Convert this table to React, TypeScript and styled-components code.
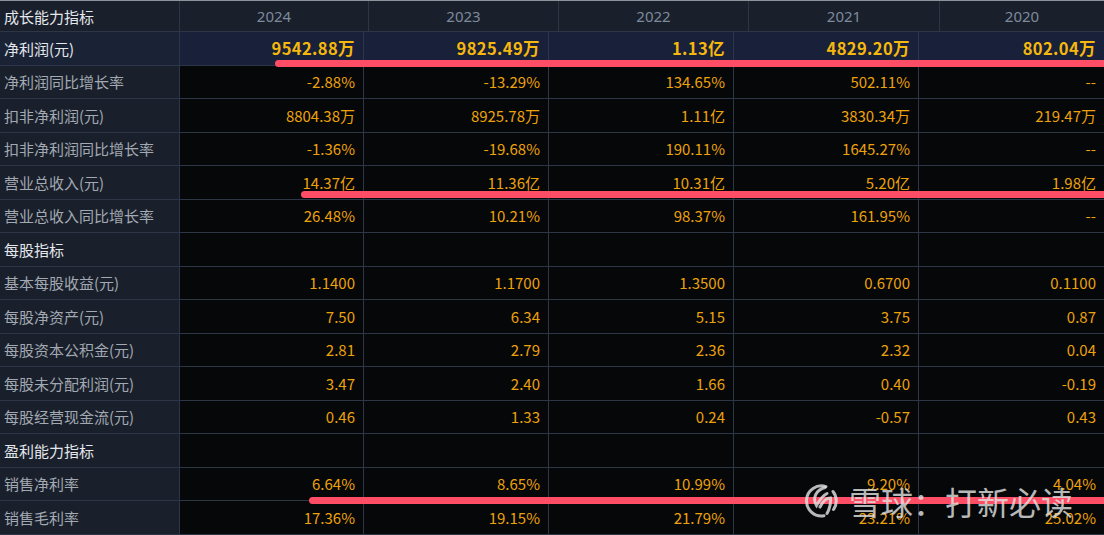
import React from "react";
import styled, { createGlobalStyle } from "styled-components";

const GlobalStyle = createGlobalStyle`
  html, body {
    margin: 0;
    padding: 0;
    background: #050709;
    overflow: hidden;
  }
  body {
    font-family: "Noto Sans CJK SC", "Noto Sans", sans-serif;
  }
`;

const Page = styled.div`
  position: relative;
  width: 1104px;
  height: 535px;
  overflow: hidden;
  background: #050709;
  border-top: 1px solid #8d939b;
  box-sizing: border-box;
`;

const HeaderRow = styled.div`
  display: grid;
  grid-template-columns: 180px 189px 190px 190px 191px 164px;
  height: 30px;
  background: #19202b;
  border-bottom: 1px solid #2d3646;
`;

const Row = styled.div<{ $hl?: boolean }>`
  display: grid;
  grid-template-columns: 180px 184px 185px 185px 185px 185px;
  height: 33.5px;
  box-sizing: border-box;
  border-bottom: 1px solid #2d3646;
  background: ${(p) => (p.$hl ? "#18203a" : "#050709")};
`;

const Label = styled.div<{ $strong?: boolean; $hl?: boolean }>`
  display: flex;
  align-items: center;
  padding-left: 4px;
  font-size: 15px;
  color: ${(p) => (p.$strong ? "#e4e7ec" : "#a3a9b2")};
  background: ${(p) => (p.$hl ? "#1a2236" : "#19202b")};
  border-right: 1px solid #2d3646;
  white-space: nowrap;
`;

const Year = styled.div`
  display: flex;
  align-items: center;
  justify-content: center;
  font-family: "Noto Sans", sans-serif;
  font-size: 15px;
  color: #7d8a9d;
  border-right: 1px solid #2d3646;
  &:last-child {
    border-right: none;
  }
`;

const Cell = styled.div<{ $bold?: boolean }>`
  display: flex;
  align-items: center;
  justify-content: flex-end;
  padding-right: 8px;
  font-size: ${(p) => (p.$bold ? "16.5px" : "15px")};
  letter-spacing: ${(p) => (p.$bold ? "0.4px" : "0")};
  font-weight: ${(p) => (p.$bold ? 700 : 400)};
  color: ${(p) => (p.$bold ? "#f6b80c" : "#eda20a")};
  border-right: 1px solid #2d3646;
  white-space: nowrap;
  &:last-child {
    border-right: none;
  }
`;

const Marker = styled.div<{ $top: number; $left: number }>`
  position: absolute;
  top: ${(p) => p.$top}px;
  left: ${(p) => p.$left}px;
  right: -10px;
  height: 7px;
  border-radius: 4px;
  background: #fe4d64;
`;

const Watermark = styled.div`
  position: absolute;
  left: 803px;
  top: 480px;
  display: flex;
  align-items: center;
  gap: 10px;
  font-size: 32px;
  line-height: 40px;
  color: rgba(225, 225, 225, 0.82);
  white-space: nowrap;
`;

type RowData = {
  label: string;
  values?: string[];
  strong?: boolean;
  hl?: boolean;
};

const years = ["2024", "2023", "2022", "2021", "2020"];

const rows: RowData[] = [
  { label: "净利润(元)", values: ["9542.88万", "9825.49万", "1.13亿", "4829.20万", "802.04万"], strong: true, hl: true },
  { label: "净利润同比增长率", values: ["-2.88%", "-13.29%", "134.65%", "502.11%", "--"] },
  { label: "扣非净利润(元)", values: ["8804.38万", "8925.78万", "1.11亿", "3830.34万", "219.47万"] },
  { label: "扣非净利润同比增长率", values: ["-1.36%", "-19.68%", "190.11%", "1645.27%", "--"] },
  { label: "营业总收入(元)", values: ["14.37亿", "11.36亿", "10.31亿", "5.20亿", "1.98亿"] },
  { label: "营业总收入同比增长率", values: ["26.48%", "10.21%", "98.37%", "161.95%", "--"] },
  { label: "每股指标", strong: true },
  { label: "基本每股收益(元)", values: ["1.1400", "1.1700", "1.3500", "0.6700", "0.1100"] },
  { label: "每股净资产(元)", values: ["7.50", "6.34", "5.15", "3.75", "0.87"] },
  { label: "每股资本公积金(元)", values: ["2.81", "2.79", "2.36", "2.32", "0.04"] },
  { label: "每股未分配利润(元)", values: ["3.47", "2.40", "1.66", "0.40", "-0.19"] },
  { label: "每股经营现金流(元)", values: ["0.46", "1.33", "0.24", "-0.57", "0.43"] },
  { label: "盈利能力指标", strong: true },
  { label: "销售净利率", values: ["6.64%", "8.65%", "10.99%", "9.20%", "4.04%"] },
  { label: "销售毛利率", values: ["17.36%", "19.15%", "21.79%", "23.21%", "25.02%"] },
];

// 雪球 logo: open ring with two leaf strokes inside
const XueqiuLogo: React.FC = () => (
  <svg width="36" height="38" viewBox="0 0 36 38" fill="none" stroke="currentColor" strokeWidth="3" strokeLinecap="round">
    <path d="M23 4.6 A15 15 0 1 0 21 33.7" />
    <path d="M30 9.5 A15 15 0 0 1 30.5 27.5" />
    <path d="M22 5.5 C 13 8, 9 16, 13.5 23.5 C 16 19, 19 14, 24 11.5" />
    <path d="M17 25 C 20 19, 24 16, 27.5 16 C 28 22, 26 28, 24 31.5" />
  </svg>
);

const App: React.FC = () => {
  return (
    <>
      <GlobalStyle />
      <Page>
        <HeaderRow>
          <Label $strong>成长能力指标</Label>
          {years.map((y) => (
            <Year key={y}>{y}</Year>
          ))}
        </HeaderRow>
        {rows.map((r) => (
          <Row key={r.label} $hl={r.hl}>
            <Label $strong={r.strong} $hl={r.hl}>
              {r.label}
            </Label>
            {(r.values || ["", "", "", "", ""]).map((v, i) => (
              <Cell key={i} $bold={r.hl}>
                {v}
              </Cell>
            ))}
          </Row>
        ))}

        <Marker $top={59} $left={275} />
        <Marker $top={190} $left={301} />
        <Marker $top={496} $left={309} />

        <Watermark>
          <XueqiuLogo />
          <span>雪球：打新必读</span>
        </Watermark>
      </Page>
    </>
  );
};

export default App;
